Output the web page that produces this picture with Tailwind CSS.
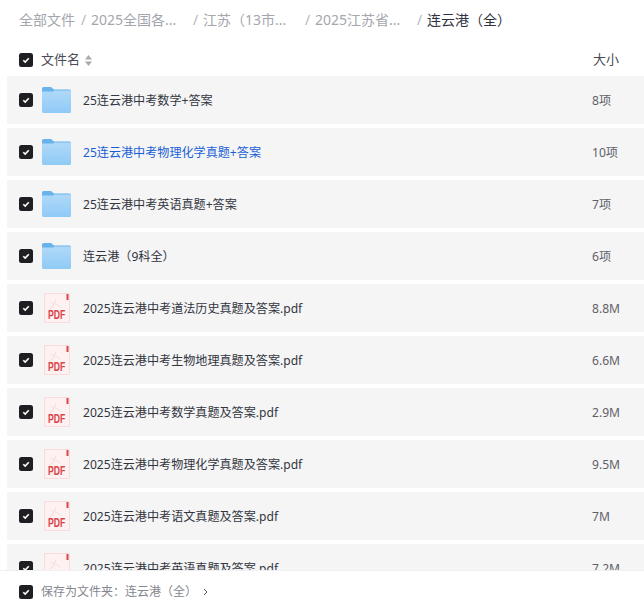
<!DOCTYPE html>
<html lang="zh-CN">
<head>
    <meta charset="UTF-8">
    <title>全部文件</title>
    <script src="https://cdn.jsdelivr.net/npm/@tailwindcss/browser@4"></script>
</head>
<body class="bg-white">
<svg width="0" height="0" class="absolute">
    <defs>
        <linearGradient id="folder-body" x1="0" y1="0" x2="0" y2="1">
            <stop offset="0" stop-color="#b0d9f9"/>
            <stop offset="1" stop-color="#8fcaf6"/>
        </linearGradient>
        <symbol id="check" viewBox="0 0 14 14">
            <rect width="14" height="14" rx="2.5" fill="#1f1f23"/>
            <path d="M4.300 7.200l1.900 1.900L9.800 5.200" fill="none" stroke="#fff" stroke-width="1.600"/>
        </symbol>
        <symbol id="folder" viewBox="0 0 29 26">
            <path d="M0 1.500q0-1.500 1.500-1.500h7.500l3 2.500h15.500q1.500 0 1.500 1.500v3H0z" fill="#68b3ec"/>
            <path d="M0 4.500h11l1.500-1h16.500V24.500q0 1.500-1.500 1.500H1.500q-1.500 0-1.500-1.500z" fill="url(#folder-body)"/>
        </symbol>
        <symbol id="pdf" viewBox="0 0 26 30">
            <path d="M.5.5h25v29H.5z" fill="#fdf1f1" stroke="#f8dcdc"/>
            <path d="M22.500 1h2v6h-2z" fill="#d9434a"/>
            <path d="M6 16c3-2 5-6 6-10M6 9c4 1 7 2 10 5" fill="none" stroke="#f9e0e0" stroke-width="1.200"/>
        </symbol>
    </defs>
</svg>
<div class="h-[606px] w-[644px] flex flex-col overflow-hidden font-['Noto_Sans','Noto_Sans_CJK_SC',sans-serif]">
    <div class="flex flex-none items-center h-[40px] pb-[2px] pl-[19px] text-[14px] text-[#a4a6ad]">
        <span class="w-[62px]">全部文件</span>
        <span class="w-[10px] text-[#b4b6bc]">/</span>
        <span class="w-[102px]">2025全国各...</span>
        <span class="w-[10px] text-[#b4b6bc]">/</span>
        <span class="w-[102px]">江苏（13市...</span>
        <span class="w-[10px] text-[#b4b6bc]">/</span>
        <span class="w-[102px]">2025江苏省...</span>
        <span class="w-[10px] text-[#b4b6bc]">/</span>
        <span class="text-[#2f3240]">连云港（全）</span>
    </div>
    <div class="flex flex-none items-center h-[36px] pt-[4px] pl-[19px] text-[13px] text-[#4a4c55]">
        <svg class="w-[14px] h-[14px]"><use href="#check"/></svg>
        <span class="ml-[8px]">文件名</span>
        <svg class="ml-[5px]" width="7" height="11" viewBox="0 0 7 11"><path d="M3.500 0L7 4.500H0z" fill="#aaa"/><path d="M3.500 11L7 6.500H0z" fill="#aaa"/></svg>
        <span class="ml-auto mr-[25px]">大小</span>
    </div>
    <div class="flex-1 min-h-0 overflow-hidden pl-[7px] flex flex-col gap-[4px]" id="list">
        <div class="row flex flex-none items-center h-[48px] bg-[#f5f5f6] pl-[12px] text-[12.100px] text-[#33353f]">
            <svg class="w-[14px] h-[14px]"><use href="#check"/></svg>
            <svg class="ml-[9px] w-[29px] h-[26px]"><use href="#folder"/></svg>
            <span class="ml-[12px] mt-[2px]">25连云港中考数学+答案</span>
            <span class="ml-auto w-[52px] mt-[2px] text-[#5f6169]">8项</span>
        </div>
        <div class="row flex flex-none items-center h-[48px] bg-[#f5f5f6] pl-[12px] text-[12.100px] text-[#1a5fd6]">
            <svg class="w-[14px] h-[14px]"><use href="#check"/></svg>
            <svg class="ml-[9px] w-[29px] h-[26px]"><use href="#folder"/></svg>
            <span class="ml-[12px] mt-[2px]">25连云港中考物理化学真题+答案</span>
            <span class="ml-auto w-[52px] mt-[2px] text-[#5f6169]">10项</span>
        </div>
        <div class="row flex flex-none items-center h-[48px] bg-[#f5f5f6] pl-[12px] text-[12.100px] text-[#33353f]">
            <svg class="w-[14px] h-[14px]"><use href="#check"/></svg>
            <svg class="ml-[9px] w-[29px] h-[26px]"><use href="#folder"/></svg>
            <span class="ml-[12px] mt-[2px]">25连云港中考英语真题+答案</span>
            <span class="ml-auto w-[52px] mt-[2px] text-[#5f6169]">7项</span>
        </div>
        <div class="row flex flex-none items-center h-[48px] bg-[#f5f5f6] pl-[12px] text-[12.100px] text-[#33353f]">
            <svg class="w-[14px] h-[14px]"><use href="#check"/></svg>
            <svg class="ml-[9px] w-[29px] h-[26px]"><use href="#folder"/></svg>
            <span class="ml-[12px] mt-[2px]">连云港（9科全）</span>
            <span class="ml-auto w-[52px] mt-[2px] text-[#5f6169]">6项</span>
        </div>
        <div class="row flex flex-none items-center h-[48px] bg-[#f5f5f6] pl-[12px] text-[12.100px] text-[#33353f]">
            <svg class="w-[14px] h-[14px]"><use href="#check"/></svg>
            <div class="relative ml-[11px] w-[26px] h-[30px]">
                <svg class="w-[26px] h-[30px]"><use href="#pdf"/></svg>
                <span class="absolute left-[4px] bottom-[3px] text-[12px] leading-[10px] font-bold text-[#d9434a] scale-x-[0.72] origin-left font-['Liberation_Sans',sans-serif]">PDF</span>
            </div>
            <span class="ml-[13px] mt-[2px]">2025连云港中考道法历史真题及答案.pdf</span>
            <span class="ml-auto w-[52px] mt-[2px] text-[#5f6169]">8.8M</span>
        </div>
        <div class="row flex flex-none items-center h-[48px] bg-[#f5f5f6] pl-[12px] text-[12.100px] text-[#33353f]">
            <svg class="w-[14px] h-[14px]"><use href="#check"/></svg>
            <div class="relative ml-[11px] w-[26px] h-[30px]">
                <svg class="w-[26px] h-[30px]"><use href="#pdf"/></svg>
                <span class="absolute left-[4px] bottom-[3px] text-[12px] leading-[10px] font-bold text-[#d9434a] scale-x-[0.72] origin-left font-['Liberation_Sans',sans-serif]">PDF</span>
            </div>
            <span class="ml-[13px] mt-[2px]">2025连云港中考生物地理真题及答案.pdf</span>
            <span class="ml-auto w-[52px] mt-[2px] text-[#5f6169]">6.6M</span>
        </div>
        <div class="row flex flex-none items-center h-[48px] bg-[#f5f5f6] pl-[12px] text-[12.100px] text-[#33353f]">
            <svg class="w-[14px] h-[14px]"><use href="#check"/></svg>
            <div class="relative ml-[11px] w-[26px] h-[30px]">
                <svg class="w-[26px] h-[30px]"><use href="#pdf"/></svg>
                <span class="absolute left-[4px] bottom-[3px] text-[12px] leading-[10px] font-bold text-[#d9434a] scale-x-[0.72] origin-left font-['Liberation_Sans',sans-serif]">PDF</span>
            </div>
            <span class="ml-[13px] mt-[2px]">2025连云港中考数学真题及答案.pdf</span>
            <span class="ml-auto w-[52px] mt-[2px] text-[#5f6169]">2.9M</span>
        </div>
        <div class="row flex flex-none items-center h-[48px] bg-[#f5f5f6] pl-[12px] text-[12.100px] text-[#33353f]">
            <svg class="w-[14px] h-[14px]"><use href="#check"/></svg>
            <div class="relative ml-[11px] w-[26px] h-[30px]">
                <svg class="w-[26px] h-[30px]"><use href="#pdf"/></svg>
                <span class="absolute left-[4px] bottom-[3px] text-[12px] leading-[10px] font-bold text-[#d9434a] scale-x-[0.72] origin-left font-['Liberation_Sans',sans-serif]">PDF</span>
            </div>
            <span class="ml-[13px] mt-[2px]">2025连云港中考物理化学真题及答案.pdf</span>
            <span class="ml-auto w-[52px] mt-[2px] text-[#5f6169]">9.5M</span>
        </div>
        <div class="row flex flex-none items-center h-[48px] bg-[#f5f5f6] pl-[12px] text-[12.100px] text-[#33353f]">
            <svg class="w-[14px] h-[14px]"><use href="#check"/></svg>
            <div class="relative ml-[11px] w-[26px] h-[30px]">
                <svg class="w-[26px] h-[30px]"><use href="#pdf"/></svg>
                <span class="absolute left-[4px] bottom-[3px] text-[12px] leading-[10px] font-bold text-[#d9434a] scale-x-[0.72] origin-left font-['Liberation_Sans',sans-serif]">PDF</span>
            </div>
            <span class="ml-[13px] mt-[2px]">2025连云港中考语文真题及答案.pdf</span>
            <span class="ml-auto w-[52px] mt-[2px] text-[#5f6169]">7M</span>
        </div>
        <div class="row flex flex-none items-center h-[48px] bg-[#f5f5f6] pl-[12px] text-[12.100px] text-[#33353f]">
            <svg class="w-[14px] h-[14px]"><use href="#check"/></svg>
            <div class="relative ml-[11px] w-[26px] h-[30px]">
                <svg class="w-[26px] h-[30px]"><use href="#pdf"/></svg>
                <span class="absolute left-[4px] bottom-[3px] text-[12px] leading-[10px] font-bold text-[#d9434a] scale-x-[0.72] origin-left font-['Liberation_Sans',sans-serif]">PDF</span>
            </div>
            <span class="ml-[13px] mt-[2px]">2025连云港中考英语真题及答案.pdf</span>
            <span class="ml-auto w-[52px] mt-[2px] text-[#5f6169]">7.2M</span>
        </div>
    </div>
    <div class="flex flex-none items-center h-[36px] pt-[6px] bg-white border-t border-[#f0f0f1] pl-[19px] text-[12px] text-[#85878f]">
        <svg class="w-[14px] h-[14px]"><use href="#check"/></svg>
        <span class="ml-[8px]">保存为文件夹：连云港（全）</span>
        <svg class="ml-[6px]" width="5" height="8" viewBox="0 0 5 8"><path d="M1 1l3 3-3 3" fill="none" stroke="#55575f" stroke-width="1"/></svg>
    </div>
</div>
</body>
</html>
